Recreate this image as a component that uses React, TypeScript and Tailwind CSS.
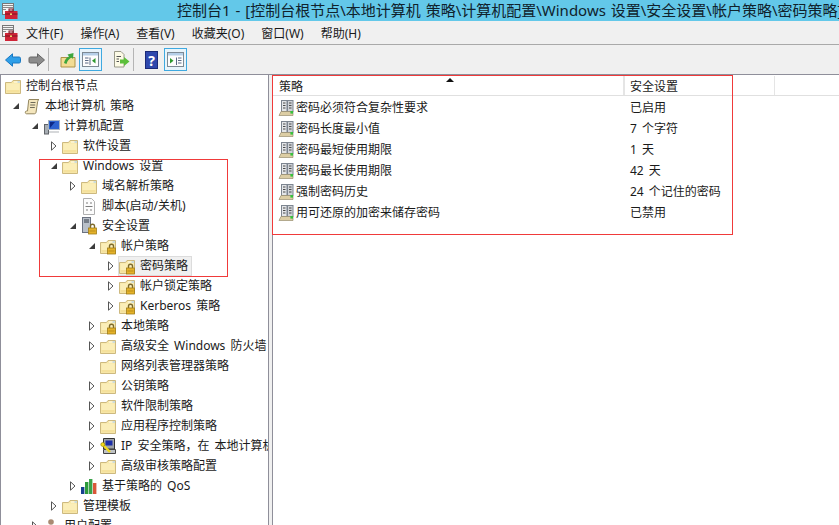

import React from "react";

const FONT = "font-['Noto_Sans','Noto_Sans_CJK_SC',sans-serif]";

function Lock() {
  return (
    <g>
      <path d="M9.5 10V8C9.5 5.6 13.5 5.6 13.5 8V10" fill="none" stroke="#7d6a2c" strokeWidth="1.4" />
      <rect x="7.5" y="10" width="8" height="6" fill="#e5b22a" stroke="#a07d18" strokeWidth="0.8" />
      <path d="M8.5 13H14.5" stroke="#b98e1c" />
    </g>
  );
}

function Folder({ lock = false }: { lock?: boolean }) {
  return (
    <svg width="17" height="17" viewBox="0 0 17 17" className="shrink-0">
      <path d="M.5 4.5H6.5L8 2.5H15.5V15.5H.5Z" fill="#f8e7a8" stroke="#cdb97f" />
      <path d="M1.5 5.5H14.5V14.5H1.5Z" fill="#fbeeb8" />
      <path d="M1.5 12H14.5V14.5H1.5Z" fill="#f5e19c" />
      <path d="M9 3.5H15V4.5H9Z" fill="#fffdf0" />
      <path d="M12.5 3.5H15V4.5H12.5Z" fill="#9cc6e6" />
      {lock && <Lock />}
    </svg>
  );
}

function Arrow({ open }: { open: boolean }) {
  return open ? (
    <svg width="8" height="8" viewBox="0 0 8 8" className="shrink-0">
      <path d="M7 1V7H1Z" fill="#3c3c3c" />
    </svg>
  ) : (
    <svg width="6" height="10" viewBox="0 0 6 10" className="shrink-0">
      <path d="M.5 .8 5 5 .5 9.2Z" fill="#fff" stroke="#555" />
    </svg>
  );
}

function Scroll() {
  return (
    <svg width="17" height="17" viewBox="0 0 17 17" className="shrink-0">
      <path d="M5 1.5H15C14 2 13.8 3 13.6 4L12 14.5C11.8 15.5 11 15.8 10 15.8H2.5C1 15.8 .8 13 2.5 13H3.5L4.6 3C4.7 2.2 4.6 1.8 5 1.5Z" fill="#f4e6bd" stroke="#94875f" />
      <path d="M6.5 4.5H11.5M6.2 7H11.2M6 9.5H10.8" stroke="#6e6a58" />
    </svg>
  );
}

function Computer() {
  return (
    <svg width="17" height="17" viewBox="0 0 17 17" className="shrink-0">
      <rect x="1.5" y="6.5" width="4" height="9.5" fill="#a7adb3" stroke="#5f6368" />
      <rect x="5.5" y="2.5" width="11" height="9" fill="#2b62cf" stroke="#a6b4c2" />
      <path d="M7 4 12 4 7 10Z" fill="#0b2a86" />
      <path d="M6 13H16V15H6Z" fill="#d6d8da" />
    </svg>
  );
}

function ScriptIcon() {
  return (
    <svg width="15" height="17" viewBox="0 0 15 17" className="shrink-0">
      <path d="M2.5 .5H10.5L13.5 3.5V16.5H2.5Z" fill="#fcfcfc" stroke="#b0b0b0" />
      <path d="M5 5H7M9 5H11M4.5 8.5H11.5M5 12H7M9 12H11" stroke="#7d7d7d" />
    </svg>
  );
}

function SecurityIcon() {
  return (
    <svg width="17" height="18" viewBox="0 0 17 18" className="shrink-0">
      <rect x="1.5" y=".5" width="8" height="15" fill="#b9c0c9" stroke="#6b7280" />
      <path d="M3 3H8M3 5H8" stroke="#333b47" />
      <g transform="translate(0,1)"><Lock /></g>
    </svg>
  );
}

function IpIcon() {
  return (
    <svg width="18" height="18" viewBox="0 0 18 18" className="shrink-0">
      <path d="M3.5 1.5H14.5V12H3.5Z" fill="#9ea3a8" stroke="#333" />
      <rect x="5.5" y="3.5" width="7" height="5" fill="#1c2fa8" />
      <path d="M3.5 12.5H15.5V16.5H3.5Z" fill="#bfc2c5" stroke="#444" />
      <path d="M2 7 10 15" stroke="#f2da1a" strokeWidth="2.4" />
      <circle cx="2.8" cy="7.5" r="2" fill="#f2da1a" stroke="#8a7a10" strokeWidth=".6" />
    </svg>
  );
}

function Chart() {
  return (
    <svg width="17" height="17" viewBox="0 0 17 17" className="shrink-0">
      <rect x="0" y="9" width="3.4" height="7" fill="#173f8f" />
      <rect x="4" y="4" width="3.4" height="12" fill="#2d9a3c" />
      <rect x="8" y="1" width="3.4" height="15" fill="#3aa34a" />
      <rect x="12" y="5" width="3.4" height="11" fill="#d9573a" />
    </svg>
  );
}

function UserIcon() {
  return (
    <svg width="17" height="17" viewBox="0 0 17 17" className="shrink-0">
      <circle cx="8" cy="4" r="2.8" fill="#a98a72" />
      <path d="M3 15V10C3 8 13 8 13 10V15Z" fill="#8a8f99" />
    </svg>
  );
}

function PolicyIcon() {
  return (
    <svg width="17" height="17" viewBox="0 0 17 17" className="shrink-0">
      <rect x="3.5" y="1.5" width="5.5" height="11" fill="#e4e6e9" stroke="#7d8590" />
      <rect x="9.5" y="1.5" width="5.5" height="11" fill="#cfd2d7" stroke="#7d8590" />
      <path d="M5 4H7.5M5 6.5H7.5M5 9H7.5M11 4H13.5M11 6.5H13.5M11 9H13.5" stroke="#4a4a4a" />
      <path d="M1 16.5 3 12.5H15V16.5Z" fill="#dccda4" stroke="#9a8e70" strokeWidth=".7" />
      <rect x="12.4" y="12" width="2.6" height="2.6" fill="#36c23c" />
    </svg>
  );
}

function ToolboxIcon() {
  return (
    <svg width="16" height="16" viewBox="0 0 16 16" className="shrink-0">
      <rect x=".5" y=".5" width="11" height="11" fill="#f4f4f4" stroke="#777" />
      <path d="M1 2.5H11M1 4.5H11M1 6.5H4" stroke="#8a8a8a" />
      <rect x="3" y="8" width="12.5" height="8" fill="#cf2436" />
      <path d="M3 11H15.5" stroke="#7b1420" />
      <rect x="7" y="6" width="4" height="2" fill="none" stroke="#7b1420" />
      <rect x="8" y="10.4" width="2" height="1.6" fill="#f3d36b" />
    </svg>
  );
}

function WinPane({ right = false }: { right?: boolean }) {
  return (
    <div className="w-[23px] h-[23px] shrink-0 flex items-center justify-center border border-[#3fa9e0] bg-[#e8f4fb]">
      <svg width="17" height="15" viewBox="0 0 17 15">
        <rect x=".5" y=".5" width="16" height="14" fill="#fdfdfd" stroke="#7d8a94" />
        <rect x="1" y="1" width="15" height="2.5" fill="#b5cfe8" />
        {right ? (
          <>
            <path d="M3 6 6.5 8.8 3 11.5Z" fill="#2e9a2e" />
            <path d="M9.5 5.5V13M11 6H14.5M11 8.5H14.5M11 11H14.5" stroke="#5b6b86" />
          </>
        ) : (
          <>
            <path d="M8 5.5V13M3 6H6.5M3 8.5H6.5M3 11H6.5" stroke="#5b6b86" />
            <path d="M13.5 6 10 8.8 13.5 11.5Z" fill="#2e9a2e" />
          </>
        )}
      </svg>
    </div>
  );
}

type Row = { pl: string; a?: boolean; label: string; icon: React.ReactNode; sel?: boolean; root?: boolean };

const f = <Folder />;
const l = <Folder lock />;
const D1 = "pl-[11px]";
const D2 = "pl-[30px]";
const D3 = "pl-[49px]";
const D4 = "pl-[68px]";
const D5 = "pl-[87px]";
const D6 = "pl-[106px]";

const rows: Row[] = [
  { pl: "pl-[3px]", root: true, label: "控制台根节点", icon: f },
  { pl: D1, a: true, label: "本地计算机 策略", icon: <Scroll /> },
  { pl: D2, a: true, label: "计算机配置", icon: <Computer /> },
  { pl: D3, a: false, label: "软件设置", icon: f },
  { pl: D3, a: true, label: "Windows 设置", icon: f },
  { pl: D4, a: false, label: "域名解析策略", icon: f },
  { pl: D4, label: "脚本(启动/关机)", icon: <ScriptIcon /> },
  { pl: D4, a: true, label: "安全设置", icon: <SecurityIcon /> },
  { pl: D5, a: true, label: "帐户策略", icon: l },
  { pl: D6, a: false, label: "密码策略", icon: l, sel: true },
  { pl: D6, a: false, label: "帐户锁定策略", icon: l },
  { pl: D6, a: false, label: "Kerberos 策略", icon: l },
  { pl: D5, a: false, label: "本地策略", icon: l },
  { pl: D5, a: false, label: "高级安全 Windows 防火墙", icon: f },
  { pl: D5, label: "网络列表管理器策略", icon: f },
  { pl: D5, a: false, label: "公钥策略", icon: f },
  { pl: D5, a: false, label: "软件限制策略", icon: f },
  { pl: D5, a: false, label: "应用程序控制策略", icon: f },
  { pl: D5, a: false, label: "IP 安全策略，在 本地计算机", icon: <IpIcon /> },
  { pl: D5, a: false, label: "高级审核策略配置", icon: f },
  { pl: D4, a: false, label: "基于策略的 QoS", icon: <Chart /> },
  { pl: D3, a: false, label: "管理模板", icon: f },
  { pl: D2, a: false, label: "用户配置", icon: <UserIcon /> },
];

const policies = [
  ["密码必须符合复杂性要求", "已启用"],
  ["密码长度最小值", "7 个字符"],
  ["密码最短使用期限", "1 天"],
  ["密码最长使用期限", "42 天"],
  ["强制密码历史", "24 个记住的密码"],
  ["用可还原的加密来储存密码", "已禁用"],
];

export default function App() {
  return (
    <div className={`${FONT} relative w-[839px] h-[525px] overflow-hidden bg-[#f0f0f0] text-[12px] text-[#1a1a1a] [word-spacing:2px]`}>
      {/* title */}
      <div className="h-[21px] bg-[#63c8e9] flex items-center pl-[2px] overflow-hidden">
        <ToolboxIcon />
        <div className="ml-[159px] text-[15px] leading-[21px] whitespace-nowrap text-[#10222c] [word-spacing:1px]">
          控制台1 - [控制台根节点\本地计算机 策略\计算机配置\Windows 设置\安全设置\帐户策略\密码策略]
        </div>
      </div>
      {/* menu */}
      <div className="h-[24px] border-b border-[#a9a9a9] flex items-center pl-[2px]">
        <ToolboxIcon />
        <div className="flex ml-[8px] gap-[17px] pt-[2px]">
          {["文件(F)", "操作(A)", "查看(V)", "收藏夹(O)", "窗口(W)", "帮助(H)"].map((m) => (
            <span key={m}>{m}</span>
          ))}
        </div>
      </div>
      {/* toolbar */}
      <div className="h-[29px] flex items-center pl-[5px]">
        <svg width="16" height="14" viewBox="0 0 16 14">
          <path d="M.5 7 7.5 .8V4H14C15.5 4 15.5 5 15.5 6V8C15.5 9 15.5 10 14 10H7.5V13.2Z" fill="#2f9fe8" stroke="#1a78c2" />
        </svg>
        <svg width="17" height="14" viewBox="0 0 17 14" className="ml-[7px]">
          <path d="M16.5 7 9.5 .8V4H2.5C1 4 1 5 1 6V8C1 9 1 10 2.5 10H9.5V13.2Z" fill="#8c8c8c" stroke="#666" />
        </svg>
        <div className="w-px h-[23px] bg-[#b5b5b5] ml-[3px]" />
        <svg width="16" height="16" viewBox="0 0 16 16" className="ml-[11px]">
          <path d="M1 5.5H15V15H1Z" fill="#f2dc93" stroke="#ae9346" />
          <path d="M4 11C5 7 7 5 9 4.5L7.5 2.5 13.5 1 13 7 11.5 5.5C9 7 7 9 6.5 12Z" fill="#3da63d" />
        </svg>
        <div className="ml-[3px]"><WinPane /></div>
        <svg width="17" height="17" viewBox="0 0 17 17" className="ml-[11px]">
          <path d="M1.5 .5H8L11 3.5V16H1.5Z" fill="#fdfbe6" stroke="#998" />
          <path d="M3.5 5.5H8M3.5 8H6M3.5 10.5H6" stroke="#555" />
          <path d="M7 8.5H11V6L16.5 10.5 11 15V12.5H7Z" fill="#5cbf3a" />
        </svg>
        <div className="w-px h-[23px] bg-[#b5b5b5] ml-[3px]" />
        <div className="ml-[11px] w-[13px] h-[18px] bg-[#2f48ad] text-white text-[14px] font-bold leading-[17px] text-center border border-[#1b2a78]">?</div>
        <div className="ml-[6px]"><WinPane right /></div>
      </div>
      {/* panes */}
      <div className="flex h-[451px] border-t border-[#8f8f9a]">
        <div className="w-[269px] h-full bg-white border-r border-[#8f8f9a] border-l pt-px overflow-hidden">
          {rows.map((r) => (
            <div key={r.label} className={`h-[20px] flex items-center whitespace-nowrap ${r.pl}`}>
              {!r.root && (
                <span className="w-[8px] shrink-0 mr-[3px] flex justify-center">
                  {r.a !== undefined && <Arrow open={r.a} />}
                </span>
              )}
              <span className={`flex items-center h-[20px] pr-[3px] border ${r.sel ? "bg-[#f0f0f0] border-[#dcdcdc]" : "border-transparent"}`}>
                <span className="w-[18px] shrink-0 flex">{r.icon}</span>
                <span className="ml-[3px]">{r.label}</span>
              </span>
            </div>
          ))}
        </div>
        <div className="ml-[3px] flex-1 bg-white border-l border-[#8f8f9a] overflow-hidden">
          <div className="h-[21px] flex border-b border-[#e0e0e0] bg-white relative pt-px">
            <div className="w-[352px] border-r-2 border-[#e5e5e5] pl-[6px] leading-[21px]">策略</div>
            <div className="w-[150px] border-r border-[#e5e5e5] pl-[5px] leading-[21px]">安全设置</div>
            <svg width="8" height="4" viewBox="0 0 8 4" className="absolute left-[173px] top-[3px]"><path d="M0 4 4 0 8 4Z" fill="#111" /></svg>
          </div>
          <div className="pt-px">
            {policies.map(([a, b]) => (
              <div key={a} className="h-[21px] flex items-center">
                <div className="w-[351px] flex items-center pl-[5px]">
                  <PolicyIcon />
                  <span className="ml-[1px]">{a}</span>
                </div>
                <div className="pl-[6px]">{b}</div>
              </div>
            ))}
          </div>
        </div>
      </div>
      {/* annotations */}
      <div className="absolute left-[39px] top-[159px] w-[189px] h-[118px] border border-[#f03a3a]" />
      <div className="absolute left-[272px] top-[75px] w-[461px] h-[160px] border border-[#f03a3a]" />
    </div>
  );
}
